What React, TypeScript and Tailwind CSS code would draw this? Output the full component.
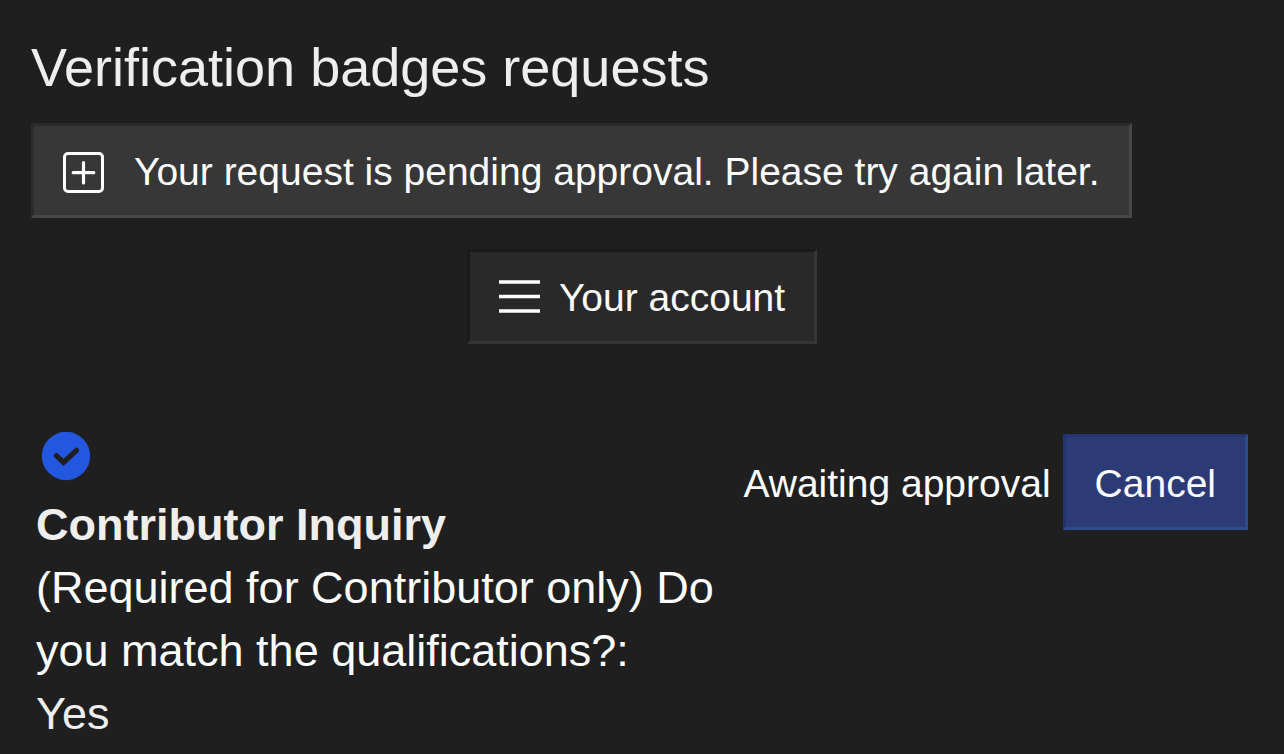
import React from 'react'

const PlusSquareIcon = () => (
  <svg className="w-[42px] h-[42px] shrink-0" viewBox="0 0 42 42" fill="none" stroke="currentColor" strokeWidth="3" strokeLinecap="round" aria-hidden="true">
    <rect x="1.5" y="1.5" width="38" height="38" rx="3.5" />
    <path strokeWidth="3.2" d="M20.5 10.500v20.500M10.200 20.700h20.600" />
  </svg>
)

const MenuIcon = () => (
  <svg className="w-[42px] h-[42px] shrink-0" viewBox="0 0 42 42" fill="none" stroke="currentColor" strokeWidth="3.5" aria-hidden="true">
    <path d="M0 4h41M0 18.500h41M0 33h41" />
  </svg>
)

const BadgeIcon = () => (
  <svg className="ml-[5px] w-[50px] h-[50px]" viewBox="0 0 50 50" fill="none" role="img" aria-label="Verified">
    <circle cx="25" cy="24" r="24.200" fill="#2457e0" />
    <path d="M15.300 23.700l7.200 6.800L35.500 18.300" stroke="#1f1f1f" strokeWidth="5.2" strokeLinecap="round" />
  </svg>
)

const App: React.FC = () => {
  return (
    <main className="min-h-screen bg-[#1f1f1f] px-[31px] pt-[35px] font-['Liberation_Sans',Arial,sans-serif] text-[#fdfdfd]">
      <h1 className="text-[54px] leading-[64px] text-[#eeeeee]">
        Verification badges requests
      </h1>

      <button
        type="button"
        className="mt-6 flex h-[95px] items-center gap-[29px] border-[3px] border-t-[#2b2b2b] border-l-[#2b2b2b] border-r-[#484848] border-b-[#484848] bg-[#373737] px-[29px] pt-1 text-[39px]"
      >
        <PlusSquareIcon />
        Your request is pending approval. Please try again later.
      </button>

      <button
        type="button"
        className="mx-auto mt-[31px] flex h-[95px] items-center gap-[18px] border-[3px] border-t-[#1a1a1a] border-l-[#1a1a1a] border-r-[#363636] border-b-[#363636] bg-[#292929] px-[29px] pt-1 text-[39px]"
      >
        <MenuIcon />
        Your account
      </button>

      <section className="mt-[88px] flex items-start justify-between px-[5px]">
        <div className="w-[690px]">
          <BadgeIcon />
          <h2 className="mt-[11px] text-[45px] leading-[63px] font-bold text-[#eeeeee]">
            Contributor Inquiry
          </h2>
          <p className="text-[45px] leading-[63px]">
            (Required for Contributor only) Do you match the qualifications?:
          </p>
          <p className="text-[45px] leading-[63px] text-[#eeeeee]">Yes</p>
        </div>
        <div className="mt-0.5 flex items-center gap-3 text-[39px]">
          <span className="pt-1 whitespace-nowrap">Awaiting approval</span>
          <button
            type="button"
            className="h-[96px] border-[3px] border-t-[#22356f] border-l-[#22356f] border-r-[#304b8c] border-b-[#304b8c] bg-[#2c3b75] px-[29px] pt-1"
          >
            Cancel
          </button>
        </div>
      </section>
    </main>
  )
}

export default App
